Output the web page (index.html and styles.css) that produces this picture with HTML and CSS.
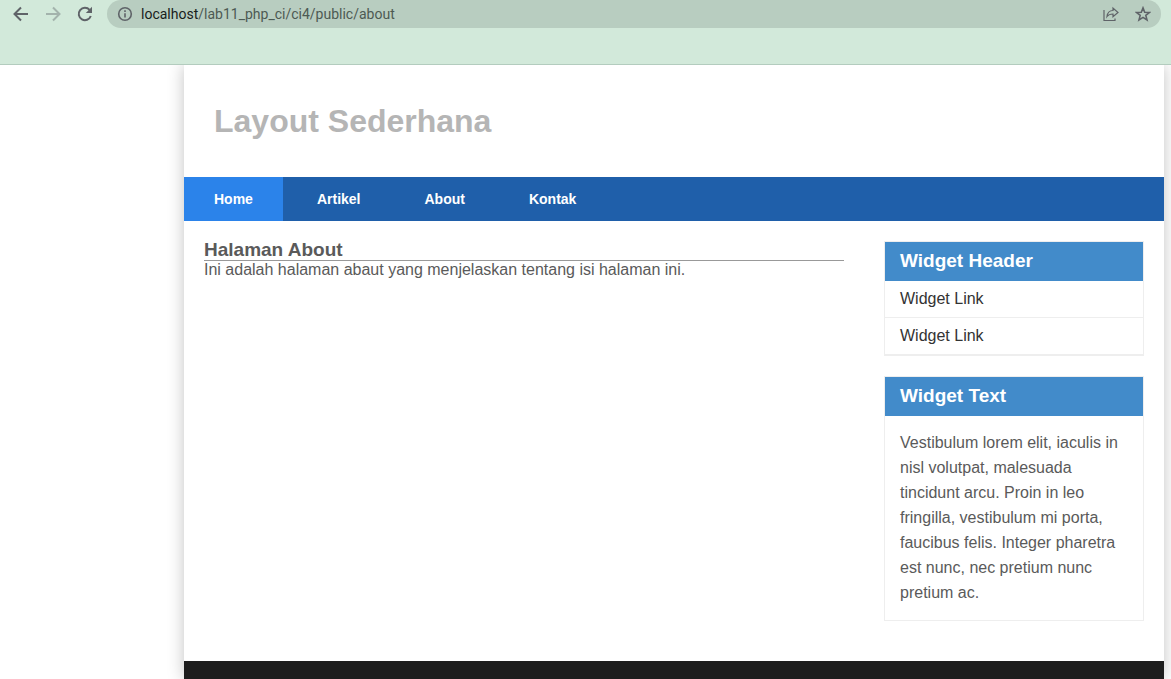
FILE: index.html
```
<!DOCTYPE html>
<html lang="id">
<head>
<meta charset="utf-8">
<title>Layout Sederhana</title>
<link rel="stylesheet" href="styles.css">
</head>
<body>
<div class="browser">
  <div class="toolbar">
    <button class="tool" type="button" aria-label="Back"><svg width="16" height="16" viewBox="0 0 16 16"><path d="M15 8H2M8 1.500 1.500 8 8 14.500"/></svg></button>
    <button class="tool tool-off" type="button" aria-label="Forward"><svg width="16" height="16" viewBox="0 0 16 16"><path d="M1 8h13M8 1.500 14.500 8 8 14.500"/></svg></button>
    <button class="tool" type="button" aria-label="Reload"><svg width="16" height="16" viewBox="0 0 16 16"><path d="M13.800 10A6.200 6.200 0 1 1 12.600 3.800"/><path class="solid" d="M15 .8V7H8.800z"/></svg></button>
    <div class="address">
      <svg class="info" width="16" height="16" viewBox="0 0 16 16"><circle cx="8" cy="8" r="6.300"/><path d="M8 7.200v4.300M8 4.300v1.700"/></svg>
      <div class="url" role="textbox" aria-label="Address" tabindex="0"><span class="host">localhost</span>/lab11_php_ci/ci4/public/about</div>
      <button class="action" type="button" aria-label="Share"><svg width="16" height="16" viewBox="0 0 16 16"><path d="M1 4v10.500h11V12.500"/><path d="M4 10.500C4.500 6.500 6.500 4.500 10 4.500V2l5 4.500-5 4.300V8C7.200 8 5.300 8.800 4 10.500z"/></svg></button>
      <button class="action star" type="button" aria-label="Bookmark"><svg width="16" height="16" viewBox="0 0 16 16"><path d="M8 1.900l1.700 4.300 4.600.3-3.500 2.900 1.200 4.500L8 11.400l-4 2.500 1.200-4.500L1.700 6.500l4.600-.3z"/></svg></button>
    </div>
  </div>
</div>
<div class="viewport">
  <div class="container">
    <header class="header"><h1>Layout Sederhana</h1></header>
    <nav class="nav">
      <a class="active" href="#">Home</a>
      <a href="#">Artikel</a>
      <a href="#">About</a>
      <a href="#">Kontak</a>
    </nav>
    <div class="content">
      <main class="main">
        <h2>Halaman About</h2>
        <hr>
        <p>Ini adalah halaman abaut yang menjelaskan tentang isi halaman ini.</p>
      </main>
      <aside class="sidebar">
        <section class="widget">
          <h3>Widget Header</h3>
          <ul>
            <li><a href="#">Widget Link</a></li>
            <li><a href="#">Widget Link</a></li>
          </ul>
        </section>
        <section class="widget">
          <h3>Widget Text</h3>
          <p>Vestibulum lorem elit, iaculis in nisl volutpat, malesuada tincidunt arcu. Proin in leo fringilla, vestibulum mi porta, faucibus felis. Integer pharetra est nunc, nec pretium nunc pretium ac.</p>
        </section>
      </aside>
    </div>
    <footer class="footer"></footer>
  </div>
</div>
</body>
</html>
```
FILE: styles.css
```
* { box-sizing: border-box; margin: 0; padding: 0; }
body {
  display: flex;
  flex-direction: column;
  height: 100vh;
  overflow: hidden;
  background: #fff;
  color: #5a5a5a;
  font: 16px/18px "Liberation Sans", Arial, sans-serif;
}
a { text-decoration: none; }
button { border: 0; background: none; }
svg { display: block; fill: none; stroke: #5f6368; stroke-width: 2; }

.browser {
  flex: none;
  padding-bottom: 36px;
  border-bottom: 1px solid #b3ccbe;
  background: #d2e9da;
}
.toolbar { display: flex; align-items: center; gap: 16px; padding: 0 10px 0 13px; }
.tool-off { opacity: .4; }
.solid { fill: #5f6368; stroke: none; }
.address {
  display: flex;
  flex: 1;
  align-items: center;
  height: 28px;
  margin-left: -2px;
  padding: 0 10px;
  border-radius: 14px;
  background: #b8cdc0;
}
.info { stroke-width: 1.6; }
.url {
  flex: 1;
  margin-left: 8px;
  color: #4d5a53;
  font: 14px/20px Roboto, "Noto Sans", sans-serif;
}
.host { color: #17201b; }
.action svg { stroke-width: 1.2; }
.star { margin-left: 16px; }
.action.star svg { stroke-width: 1.6; }

.viewport { flex: 1; min-height: 0; overflow: hidden; padding-right: 7px; }
.container {
  display: flex;
  flex-direction: column;
  max-width: 980px;
  min-height: 100%;
  margin-left: auto;
  background: #fff;
  box-shadow: 0 0 16px rgba(0, 0, 0, .24);
}
.header { padding: 36px 30px; }
.header h1 { color: #b5b5b5; font-size: 32px; line-height: 40px; }
.nav { display: flex; gap: 4px; background: #1f5faa; }
.nav a {
  padding: 13px 30px;
  color: #fff;
  font-size: 14px;
  font-weight: bold;
  line-height: 18px;
}
.nav .active { background: #2b83ea; }
.content { display: flex; gap: 40px; padding: 20px 20px 40px; }
.main { flex: 1; }
.main h2 { font-size: 19px; line-height: 18px; }
.main hr { margin-top: 1px; border: 0; border-top: 1px solid #999; }
.sidebar { display: grid; flex: none; gap: 20px; width: 260px; }
.widget { border: 1px solid #eee; }
.widget h3 {
  padding: 9px 15px 10px;
  background: #428bca;
  color: #fff;
  font-size: 19px;
  line-height: 20px;
}
.widget ul { list-style: none; }
.widget li { border-bottom: 1px solid #eee; }
.widget li a { display: block; padding: 9px 15px; color: #333; }
.widget p { padding: 14px 15px 15px; line-height: 25px; }
.footer { flex: 1; background: #1d1d1d; }
```
